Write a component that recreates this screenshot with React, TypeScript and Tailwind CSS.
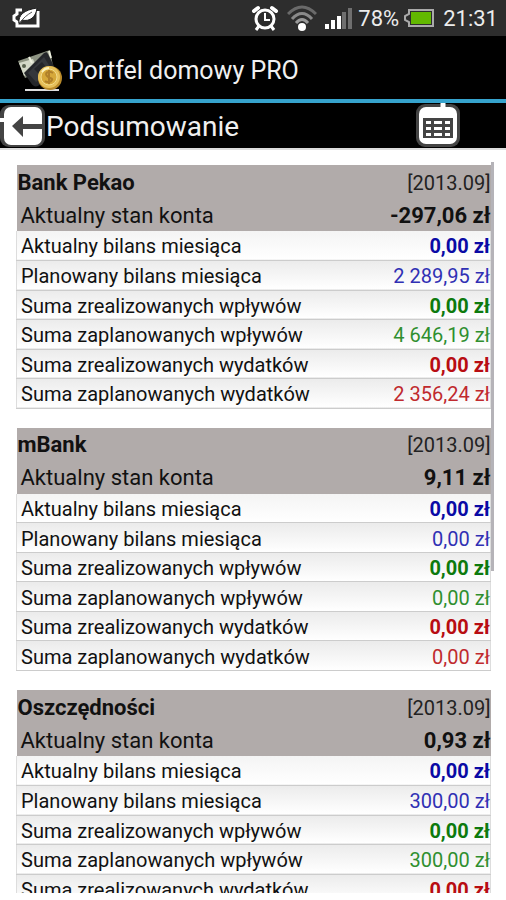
const accounts = [
  {
    name: "Bank Pekao",
    balance: "-297,06 zł",
    values: ["0,00 zł", "2 289,95 zł", "0,00 zł", "4 646,19 zł", "0,00 zł", "2 356,24 zł"],
  },
  {
    name: "mBank",
    balance: "9,11 zł",
    values: ["0,00 zł", "0,00 zł", "0,00 zł", "0,00 zł", "0,00 zł", "0,00 zł"],
  },
  {
    name: "Oszczędności",
    balance: "0,93 zł",
    values: ["0,00 zł", "300,00 zł", "0,00 zł", "300,00 zł", "0,00 zł", "0,00 zł"],
  },
];

const rows = [
  { label: "Aktualny bilans miesiąca", style: "font-bold text-[#0a0aa5]" },
  { label: "Planowany bilans miesiąca", style: "text-[#3030b4]" },
  { label: "Suma zrealizowanych wpływów", style: "font-bold text-[#0d7a0d]" },
  { label: "Suma zaplanowanych wpływów", style: "text-[#2f8f2f]" },
  { label: "Suma zrealizowanych wydatków", style: "font-bold text-[#b80d12]" },
  { label: "Suma zaplanowanych wydatków", style: "text-[#c02a2e]" },
];

const StatusBar = () => {
  return (
    <div className="flex h-9 shrink-0 items-center bg-[#2d2d2d] pl-3 pr-2 text-[22px] text-[#ececec]">
      <svg width="28" height="20" viewBox="0 0 28 20" fill="none">
        <path d="M10 2H5v4L2 8v4l3 2v4h21V3" stroke="#fff" strokeWidth="3" />
        <path d="M7 15C6 7 12 2 25 0c-1 9-7 14-15 12l-2 3z" fill="#fff" stroke="#1c1c1c" />
        <path d="M8 15C11 10 15 7 20 4" stroke="#555" />
      </svg>
      <div className="ml-auto flex items-center">
        <svg width="28" height="28" viewBox="0 0 28 28" fill="none" stroke="#fff">
          <circle cx="14" cy="15" r="9" strokeWidth="3" />
          <path d="M14 9v7h5" strokeWidth="2" />
          <path d="M3 7l4-3M25 7l-4-3" strokeWidth="4" strokeLinecap="round" />
          <path d="M8 22l-3 4M20 22l3 4" strokeWidth="3" />
        </svg>
        <svg className="ml-2" width="30" height="26" viewBox="0 0 30 26" fill="none" strokeWidth="3">
          <path d="M1 9Q15-5 29 9" stroke="#6a6a6a" />
          <path d="M5 14Q15 3 25 14" stroke="#8a8a8a" />
          <path d="M9 18Q15 11 21 18" stroke="#9a9a9a" />
          <circle cx="15" cy="22" r="4" fill="#fff" />
        </svg>
        <svg className="ml-2" width="27" height="22" viewBox="0 0 27 22">
          <path d="M0 17h4v5H0zM6 13h4v9H6zM12 9h4v13h-4z" fill="#fff" />
          <path d="M17 5h4v17h-4zM23 1h4v21h-4z" fill="#6f6f6f" />
        </svg>
        <span className="ml-1.5 pt-0.5">78%</span>
        <svg className="ml-1" width="32" height="20" viewBox="0 0 32 20">
          <path d="M6 2h24v16H6v-4l-4-2V8l4-2z" fill="#2d2d2d" stroke="#aaa" strokeWidth="2" />
          <path d="M8 4h20v12H8z" fill="#62b800" />
        </svg>
        <span className="ml-2 pt-0.5">21:31</span>
      </div>
    </div>
  );
};

const Logo = () => {
  return (
    <svg width="48" height="44" viewBox="0 0 48 44">
      <path d="M2 12l32-11 3 16-28 12z" fill="#8d9382" />
      <path d="M3 14l14-4 4 9-13 8z" fill="#d3d8c8" />
      <circle cx="8" cy="17" r="2" fill="#59624f" />
      <path d="M13 8l3 6M33 2l2 7" stroke="#eef0df" strokeWidth="2" />
      <path d="M8 24L28 4c2-1 3-1 4 1l8 16-18 16c-3 1-5 0-7-3z" fill="#24262a" />
      <path d="M12 24L28 8l8 13-16 12z" fill="#34373c" />
      <path d="M18 20l8-7 4 5-8 6z" fill="#232529" />
      <path d="M9 41h34" stroke="#ddd" strokeWidth="2" />
      <circle cx="34" cy="29" r="12" fill="#b98a2a" />
      <circle cx="33" cy="28" r="11" fill="#e6c05a" />
      <circle cx="33" cy="28" r="8" fill="#d6a83a" stroke="#f3dc8c" />
      <path d="M37 24c-4-3-9 0-6 3s6 2 5 4-5 3-7 1M33 21v14" fill="none" stroke="#b0802a" strokeWidth="2" />
      <path d="M26 23c2-3 4-4 7-4" fill="none" stroke="#fbf0bb" strokeWidth="2" />
    </svg>
  );
};

const AccountTable = ({ account }: { account: (typeof accounts)[number] }) => {
  return (
    <table className="w-full border-collapse">
      <thead className="bg-[#b1abaa] text-[#111]">
        <tr className="h-[34px] text-[22px]">
          <th scope="col" className="pl-px pt-px text-left font-bold">
            {account.name}
          </th>
          <th scope="col" className="pt-px text-right text-xl font-normal text-[#222]">
            [2013.09]
          </th>
        </tr>
        <tr className="h-8 text-[22px]">
          <th scope="row" className="pl-1 pt-px text-left font-normal">
            Aktualny stan konta
          </th>
          <td className="pt-px text-right font-bold">{account.balance}</td>
        </tr>
      </thead>
      <tbody className="border-x border-[#ddd]">
        {rows.map((row, i) => (
          <tr
            key={row.label}
            className="h-[29px] border-b border-[#ccc] bg-linear-to-b from-[#ebebeb] to-white text-xl/6 first:from-[#f4f4f4] even:h-[30px]"
          >
            <th scope="row" className="pl-1 pt-0.5 text-left font-normal text-[#111]">
              {row.label}
            </th>
            <td className={"pt-0.5 text-right " + row.style}>{account.values[i]}</td>
          </tr>
        ))}
      </tbody>
    </table>
  );
};

const App = () => {
  return (
    <div className="flex h-dvh flex-col bg-white pb-[7px] font-[Roboto,sans-serif] leading-none">
      <StatusBar />
      <div className="flex h-[63px] shrink-0 items-center gap-1 bg-black pl-4 pt-1.5 text-[25px] text-[#f0f0f0]">
        <Logo />
        <h1>Portfel domowy PRO</h1>
      </div>
      <div className="flex h-[51px] shrink-0 items-center border-b-2 border-t-4 border-b-[#ddd] border-t-[#36a3cd] bg-black text-[28px] text-[#f0f0f0]">
        <button aria-label="Wstecz">
          <svg width="46" height="44" viewBox="0 0 46 44">
            <rect x="0" y="1" width="45" height="42" rx="9" fill="#444" />
            <path d="M0 16h8" stroke="#fff" strokeWidth="4" />
            <rect x="4" y="3" width="38" height="38" rx="7" fill="#fff" />
            <path d="M12 22l11-10v8h20v5H23v8z" fill="#444" />
          </svg>
        </button>
        <h2 className="pt-0.5">Podsumowanie</h2>
        <button aria-label="Kalendarz" className="ml-auto mr-11">
          <svg width="46" height="45" viewBox="0 0 46 45">
            <rect x="0" y="1" width="44" height="43" rx="9" fill="#444" />
            <path d="M27 0v8" stroke="#fff" strokeWidth="5" />
            <rect x="3" y="4" width="38" height="37" rx="7" fill="#fff" />
            <path d="M7 15h30v20H7z" fill="#444" />
            <path d="M10 18h5v3h-5zM18 18h8v3h-8zM29 18h5v3h-5zM10 24h5v3h-5zM18 24h8v3h-8zM29 24h5v3h-5zM10 30h5v3h-5zM18 30h8v3h-8zM29 30h5v3h-5z" fill="#fff" />
          </svg>
        </button>
      </div>
      <main className="relative min-h-0 flex-1">
        <div className="flex h-full flex-col gap-[19px] overflow-y-auto pl-4 pr-[15px] pt-[15px] [scrollbar-width:none]">
          {accounts.map((account) => (
            <AccountTable key={account.name} account={account} />
          ))}
        </div>
        <div className="absolute right-3 top-3 h-[55%] w-[3px] bg-[#b5b3b8]" />
      </main>
    </div>
  );
};

export default App;
